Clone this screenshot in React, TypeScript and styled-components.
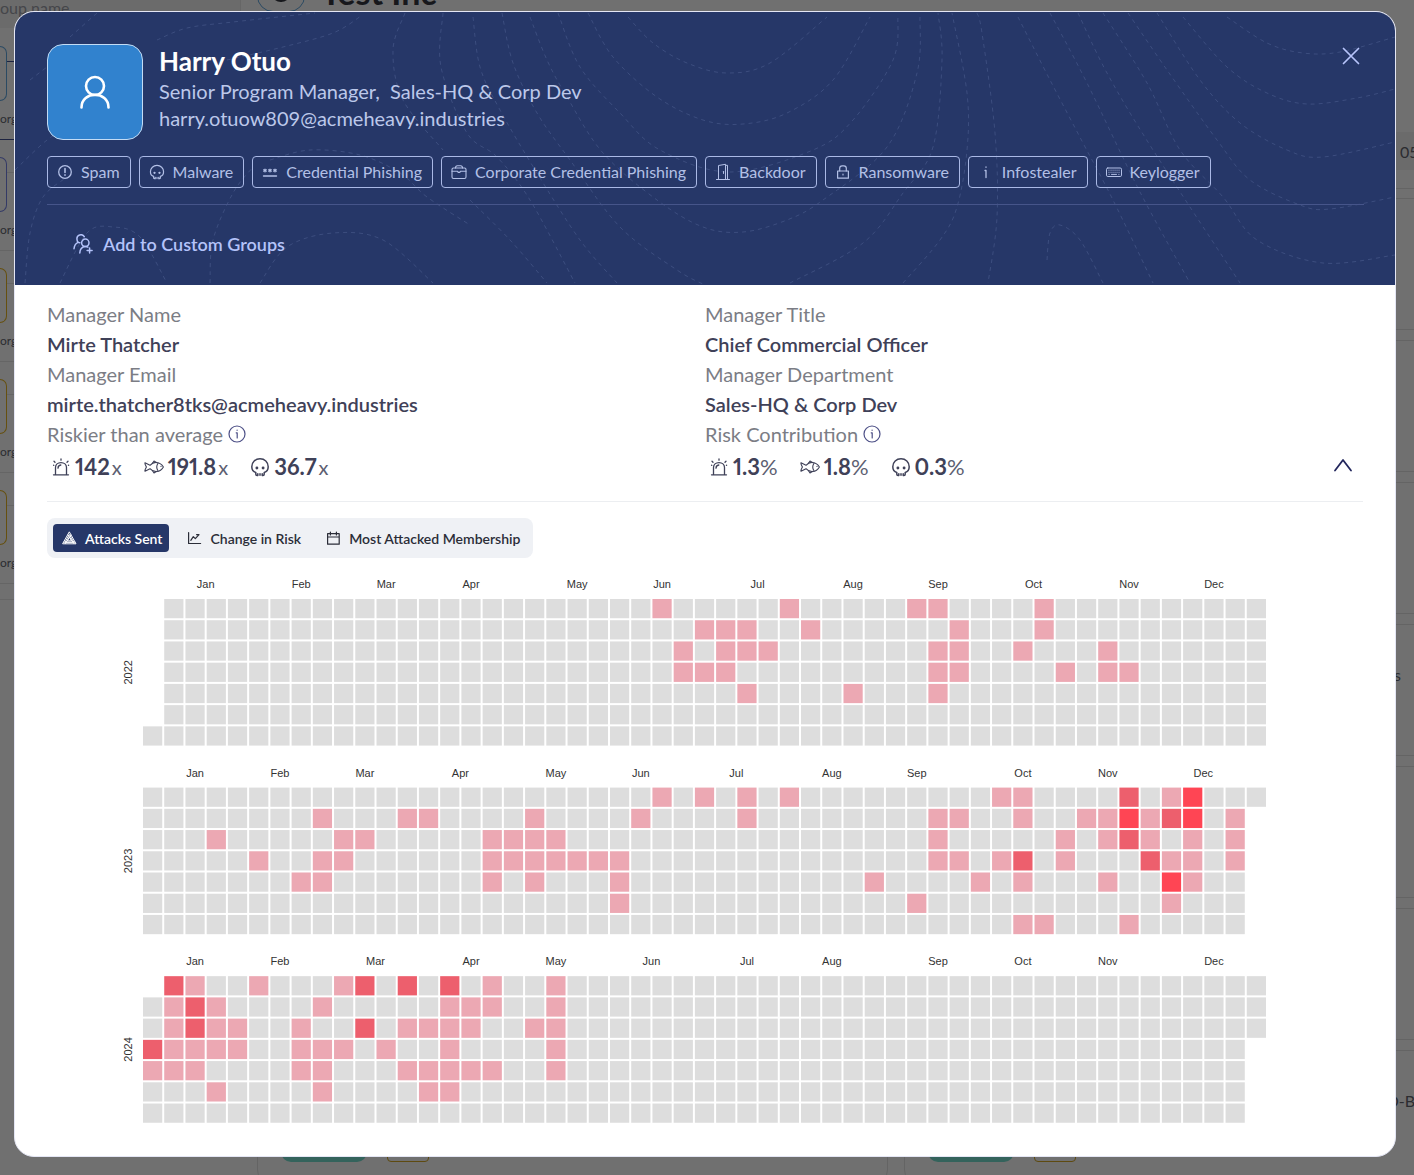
import React from "react";
import styled, { createGlobalStyle } from "styled-components";

const GlobalStyle = createGlobalStyle`
  *, *::before, *::after { box-sizing: border-box; }
  body { margin: 0; background: #707070; }
  button { font: inherit; color: inherit; background: none; border: 0; padding: 0; cursor: pointer; }
  h1, h2, p, ul, dl, dd, dt { margin: 0; padding: 0; }
`;

/* ---------- Dimmed page behind the dialog ---------- */

const Page = styled.div`
  position: relative;
  min-height: 100vh;
  overflow: hidden;
  background: #707070;
  font-family: Lato, "Noto Sans", sans-serif;
`;

const Behind = styled.div`
  position: absolute;
  inset: 0;
  display: flex;
  overflow: hidden;
  color: #2b2c30;
`;

const Sidebar = styled.aside`
  flex: 0 0 241px;
  height: 600px;
  border-bottom: 1px solid #666666;
`;

const SearchHint = styled.p`
  height: 28px;
  margin-bottom: 18px;
  border-right: 1px solid #666666;
  background: #6b6b6b;
  color: #45464a;
  font-size: 16px;
  line-height: 16px;
`;

const Node = styled.div<{ $divider: string }>`
  height: 94px;
  margin-bottom: 17px;
  border-bottom: 1px solid ${(p) => p.$divider};
  font-size: 12px;
  line-height: 36px;
`;

const NodeTop = styled.div<{ $line: string }>`
  display: flex;
  &::after {
    content: "";
    flex: 1;
    height: 16px;
    border-bottom: 1px solid ${(p) => p.$line};
  }
`;

const NodeBox = styled.div<{ $color: string }>`
  width: 7px;
  height: 55px;
  border: 1px solid ${(p) => p.$color};
  border-left: 0;
  border-radius: 0 12px 12px 0;
`;

const Main = styled.div`
  flex: 1;
  min-width: 0;
  padding-left: 16px;
`;

const TitleRow = styled.div`
  display: flex;
  align-items: flex-end;
  gap: 16px;
  height: 12px;
  color: #17181c;
  font-size: 34px;
  font-weight: 700;
  line-height: 40px;
`;

const TitleIcon = styled.div`
  display: flex;
  justify-content: center;
  align-items: flex-end;
  width: 48px;
  height: 48px;
  padding-bottom: 8px;
  border: 1px solid #2b4a63;
  border-radius: 16px;
`;

const FilterBand = styled.div`
  display: flex;
  align-items: center;
  height: 38px;
  margin: 120px 0 18px 647px;
  padding-left: 496px;
  background: #6b6b6b;
  font-size: 16px;
  white-space: nowrap;
`;

const CardGrid = styled.div`
  display: grid;
  grid-template-columns: 631px 631px;
  grid-auto-rows: 132px;
  gap: 10px 16px;
  padding-top: 9px;
  border-top: 1px solid #646464;
`;

const Card = styled.div`
  display: flex;
  flex-direction: column;
  justify-content: space-between;
  padding: 38px 23px 19px;
  border: 1px solid #646464;
  border-radius: 12px;
`;

const CardNote = styled.span<{ $indent: number }>`
  height: 24px;
  padding-left: ${(p) => p.$indent}px;
  font-size: 16px;
  line-height: 24px;
  white-space: nowrap;
`;

const Badges = styled.div`
  display: flex;
  gap: 20px;
`;

const Pill = styled.span`
  width: 86px;
  height: 20px;
  border-radius: 10px;
  background: #34635c;
`;

const Outline = styled.span`
  width: 42px;
  height: 20px;
  border: 1px solid #5e4a10;
  border-radius: 4px;
`;

/* ---------- Dialog ---------- */

const Dialog = styled.section`
  position: relative;
  margin: 11px 18px 18px 14px;
  border: 1px solid #e4e6f4;
  border-radius: 20px;
  background: #ffffff;
  overflow: hidden;
`;

const Header = styled.header`
  position: relative;
  padding: 32px 31px 0 32px;
  background: #263768;
  color: #bcc8ea;
`;

const Contours = styled.svg`
  position: absolute;
  inset: 0;
  width: 100%;
  height: 100%;
  fill: none;
  stroke: #8f9fd0;
  stroke-opacity: 0.22;
  stroke-dasharray: 4 4;
`;

const HeaderInner = styled.div`
  position: relative;
`;

const Identity = styled.div`
  display: flex;
  align-items: flex-start;
  gap: 16px;
`;

const Avatar = styled.div`
  display: grid;
  place-items: center;
  width: 96px;
  height: 96px;
  border: 1px solid #c3dcf5;
  border-radius: 16px;
  background: #3182ce;
  color: #ffffff;
`;

const Who = styled.div`
  flex: 1;
  font-size: 20px;
  line-height: 27px;
`;

const Name = styled.h1`
  color: #ffffff;
  font-size: 26px;
  line-height: 34px;
  font-weight: 700;
`;

const CloseButton = styled.button`
  display: grid;
  place-items: center;
  width: 26px;
  height: 24px;
  color: #b7c4fb;
`;

const Chips = styled.ul`
  display: flex;
  flex-wrap: wrap;
  gap: 8px;
  margin: 16px 0;
  list-style: none;
`;

const Chip = styled.li`
  display: flex;
  align-items: center;
  gap: 8px;
  height: 32px;
  padding: 0 10px 1px 9px;
  border: 1px solid #aab9e6;
  border-radius: 4px;
  color: #b3c0e6;
  font-size: 16px;
  line-height: 20px;
  white-space: nowrap;
`;

const Actions = styled.div`
  display: flex;
  align-items: center;
  height: 81px;
  padding-bottom: 2px;
  border-top: 1px solid #46558a;
`;

const GroupButton = styled.button`
  display: flex;
  align-items: center;
  gap: 10px;
  height: 40px;
  padding: 0 26px;
  color: #b4c3fa;
  font-size: 18px;
  font-weight: 600;
`;

const Body = styled.div`
  padding: 14px 32px 16px;
`;

const Details = styled.div`
  display: grid;
  grid-template-columns: 1fr 1fr;
  padding-bottom: 16px;
  border-bottom: 1px solid #eceef1;
`;

const Fields = styled.dl`
  font-size: 20px;
  line-height: 30px;
`;

const Label = styled.dt`
  display: flex;
  align-items: center;
  gap: 5px;
  color: #7b7d85;
`;

const Value = styled.dd`
  color: #3f4158;
  font-weight: 600;
`;

const Stats = styled.dd`
  display: flex;
  align-items: center;
  gap: 22px;
  height: 36px;
  padding-left: 4px;
  color: #3f4158;
`;

const Stat = styled.span`
  display: flex;
  align-items: center;
  gap: 4px;
  font-size: 22px;
  font-weight: 700;
  font-variant-numeric: proportional-nums;
`;

const Unit = styled.span<{ $apart: boolean }>`
  margin-left: ${(p) => (p.$apart ? "2px" : "0")};
  color: #5d5f72;
  font-size: ${(p) => (p.$apart ? "20px" : "22px")};
  font-weight: 400;
`;

const CollapseButton = styled.button`
  display: grid;
  place-items: center;
  width: 40px;
  height: 36px;
  margin-left: auto;
  color: #22265c;
`;

const Tabs = styled.div`
  display: inline-flex;
  gap: 9px;
  margin-top: 16px;
  padding: 6px;
  border-radius: 8px;
  background: #eff1f5;
  vertical-align: top;
`;

const Tab = styled.button<{ $active?: boolean }>`
  display: flex;
  align-items: center;
  gap: 8px;
  height: 28px;
  padding: 0 7px 0 9px;
  border-radius: 4px;
  background: ${(p) => (p.$active ? "#263768" : "transparent")};
  color: ${(p) => (p.$active ? "#ffffff" : "#2b2d38")};
  font-size: 14px;
  font-weight: 600;
`;

const Chart = styled.svg`
  display: block;
  width: 100%;
  font-family: "Liberation Sans", Arial, sans-serif;
  font-size: 11px;
  fill: #333333;
`;

/* ---------- Icons ---------- */

const Icon = styled.svg`
  flex: none;
  fill: none;
  stroke: currentColor;
  stroke-linecap: round;
  stroke-linejoin: round;
`;

const PersonIcon = () => (
  <Icon width="32" height="34" viewBox="0 0 32 34" strokeWidth="2.6">
    <circle cx="16" cy="11" r="9" />
    <path d="M2.500 32.500 C2.500 15.500 29.500 15.500 29.500 32.500" />
  </Icon>
);

const SpamIcon = () => (
  <Icon width="16" height="16" viewBox="0 0 16 16" strokeWidth="1.3">
    <circle cx="8" cy="8" r="6.300" />
    <path d="M8 4.500v4M8 10.900v.4" strokeWidth="1.600" />
  </Icon>
);

const SkullIcon = ({ size = 16 }: { size?: number }) => (
  <Icon width={size} height={size} viewBox="0 0 20 20" strokeWidth="1.500">
    <path d="M5.800 17v-1.600C3 14.800 1.800 12.600 1.800 9.800 1.800 5 5.400 1.800 10 1.800s8.200 3.200 8.200 8c0 2.800-1.200 5-4 5.600V17M5.800 15.600v1.600c0 .8.600 1.200 1.300 1.200h.7v-1.600M10 16.800v1.400M12.200 16.800v1.600h.7c.7 0 1.300-.4 1.300-1.200" />
    <circle cx="6.900" cy="11" r=".7" fill="currentColor" />
    <circle cx="13.100" cy="11" r=".7" fill="currentColor" />
  </Icon>
);

const PasswordIcon = () => (
  <Icon width="16" height="16" viewBox="0 0 16 16" strokeWidth="1.100">
    <path d="M1.500 12h13" strokeWidth="1.400" />
    <path d="M3 5v3M1.700 5.700l2.600 1.600M4.300 5.700L1.700 7.300M8 5v3M6.700 5.700l2.600 1.600M9.300 5.700L6.700 7.300M13 5v3M11.700 5.700l2.600 1.600M14.300 5.700l-2.600 1.600" />
  </Icon>
);

const BriefcaseIcon = () => (
  <Icon width="16" height="16" viewBox="0 0 16 16" strokeWidth="1.100">
    <rect x="1" y="4" width="14" height="10.500" rx="1.500" />
    <path d="M4.500 4c0-1.500.5-2.300 1.800-2.300h3.400c1.300 0 1.800.8 1.800 2.300M1 7.200h5.600l.6 1.200h1.600l.6-1.200H15" />
  </Icon>
);

const DoorIcon = () => (
  <Icon width="16" height="18" viewBox="0 0 16 18" strokeWidth="1">
    <path d="M1.500 16.500h13M3.500 16.500v-14l7-1.200v15.200M10.500 2.300h2v14.200M8.500 8.500v2" />
  </Icon>
);

const LockIcon = () => (
  <Icon width="16" height="16" viewBox="0 0 16 16" strokeWidth="1.200">
    <rect x="2.600" y="7" width="10.800" height="7.200" />
    <path d="M4.700 7V4.200c0-1.600 1-2.400 2.400-2.400h1.800c1.400 0 2.400.8 2.400 2.400V7M8 10.200v.8" />
  </Icon>
);

const LetterIIcon = () => (
  <Icon width="16" height="16" viewBox="0 0 16 16" strokeWidth="1.300">
    <path d="M8 6.500v7M8 3v.3M7 6.500h1" />
  </Icon>
);

const KeyboardIcon = () => (
  <Icon width="16" height="16" viewBox="0 0 16 16" strokeWidth="1">
    <rect x=".5" y="4" width="15" height="8.500" rx="1.300" />
    <path d="M2.900 6.200h.1M5 6.200h.1M7 6.200h.1M9 6.200h.1M11 6.200h.1M13 6.200h.1M2.900 8.300h.1M5 8.300h.1M7 8.300h.1M9 8.300h.1M11 8.300h.1M13 8.300h.1" />
    <path d="M3 10.400h.2M5.500 10.400h5M12.800 10.400h.2" />
  </Icon>
);

const CloseIcon = () => (
  <Icon width="18" height="18" viewBox="0 0 18 18" strokeWidth="1.700">
    <path d="M1.500 1.500l15 15M16.500 1.500l-15 15" />
  </Icon>
);

const AddGroupIcon = () => (
  <Icon width="20" height="20" viewBox="0 0 20 20" strokeWidth="1.500">
    <circle cx="12.300" cy="8.800" r="3.700" />
    <path d="M6.800 19c0-3.300 2-6.500 5.500-6.500 1 0 1.800.2 2.600.6" />
    <path d="M11.300 2.600A4 4 0 0 0 4 5.400c0 1.300.5 2.300 1.300 3C2.700 9.400 1.300 11.800 1 14.800M5.300 8.400l1.500.4" />
    <path d="M16.600 14v5M14.100 16.500h5" />
  </Icon>
);

const InfoIcon = () => (
  <Icon width="18" height="18" viewBox="0 0 18 18" strokeWidth="1.200" color="#4c4f86">
    <circle cx="9" cy="9" r="8" />
    <path d="M8.200 7.800H9.200V13M9.100 5v.3" />
  </Icon>
);

const SirenIcon = () => (
  <Icon width="20" height="20" viewBox="0 0 20 20" strokeWidth="1.300">
    <path d="M2.500 17.800h15M4.500 17.600v-7c0-3 2.300-5 5.500-5s5.500 2 5.500 5v7M7 11.200c0-2 1-3 2.800-3.200" />
    <path d="M10 2v1.200M3 4.300l1 1M17 4.300l-1 1M2.800 8.400l-.2-.2M17.400 8.400l.2-.2" />
  </Icon>
);

const FishIcon = () => (
  <Icon width="20" height="20" viewBox="0 0 20 20" strokeWidth="1.100">
    <path d="M6 8.300C9.500 4.200 16 4.200 19.400 10c-3.400 5.800-9.900 5.800-13.400 1.700L1 14.200c-.4-1 .3-2 1.400-4.200C1.300 7.800.6 6.800 1 5.800z" />
    <path d="M8.500 6.200L10 4l2.600 1.600M8.500 13.800L10 16l2.600-1.600M14 6.200c-1.600 2.400-1.600 5.200 0 7.600M17 9.300v.2" />
  </Icon>
);

const ChevronUpIcon = () => (
  <Icon width="20" height="18" viewBox="0 0 20 18" strokeWidth="1.800">
    <path d="M2 12.500L10 2l8 10.500" />
  </Icon>
);

const TriangleIcon = () => (
  <Icon width="15" height="14" viewBox="0 0 15 14" strokeWidth="1">
    <path d="M7.500 1.200L14 12.800H1zM7.500 3.800L11.800 11.200H3.400zM7.500 6.400L9.600 9.800H5.600zM6 4l6 8.600M9 4L3.200 12.600M2 11.200h11" />
  </Icon>
);

const LineChartIcon = () => (
  <Icon width="15" height="14" viewBox="0 0 15 14" strokeWidth="1.200">
    <path d="M1.600 1.500v11h12M3.800 9.300l2.500-3.600 2 2 3.700-4M9.600 3.700H12" />
  </Icon>
);

const CalendarIcon = () => (
  <Icon width="15" height="14" viewBox="0 0 15 14" strokeWidth="1.200">
    <path d="M1.600 2.700h11.600v10.500H1.600zM1.600 6h11.600M4.400 1v3M10.400 1v3" />
  </Icon>
);

/* ---------- Header contour lines ---------- */

type Point = [number, number];

const contourLines: Point[][] = [
  [[142, 28], [172, 16], [218, 10], [300, 1]],
  [[212, 48], [268, 35], [318, 21], [346, 4]],
  [[55, 25], [82, 1]],
  [[15, 68], [32, 55], [55, 38]],
  [[0, 158], [32, 128], [56, 114]],
  [[10, 271], [15, 221], [28, 185], [52, 165]],
  [[390, 1], [378, 38], [388, 88], [428, 138]],
  [[428, 1], [426, 55], [452, 121], [482, 145], [515, 188], [560, 271]],
  [[255, 148], [295, 138], [345, 143], [385, 161], [412, 185], [455, 213]],
  [[195, 271], [198, 228], [218, 181], [238, 155]],
  [[45, 271], [72, 221], [98, 215], [125, 225], [152, 271]],
  [[245, 271], [272, 235], [318, 221], [368, 228], [418, 271]],
  [[613, 5], [638, 31], [672, 51], [712, 61], [755, 51], [812, 5]],
  [[573, 1], [598, 45], [642, 85], [688, 108], [728, 112], [772, 101], [818, 68], [855, 5]],
  [[543, 1], [565, 55], [605, 101], [645, 138], [715, 160], [798, 138], [838, 108], [878, 48], [883, 5]],
  [[515, 5], [532, 48], [552, 85], [588, 141], [642, 188], [688, 215], [728, 220], [772, 208], [808, 188], [872, 135], [902, 61], [905, 5]],
  [[487, 1], [498, 51], [522, 101], [555, 148], [605, 215], [662, 258], [690, 273]],
  [[775, 271], [848, 231], [888, 181], [918, 135], [927, 48], [923, 1]],
  [[458, 5], [465, 55], [485, 98], [522, 161], [565, 228], [602, 271]],
  [[455, 188], [495, 228], [532, 271]],
  [[888, 271], [925, 228], [942, 195], [952, 138], [952, 81], [937, 1]],
  [[962, 1], [967, 21], [980, 121], [982, 205], [973, 271]],
  [[1032, 248], [1035, 221], [1045, 213], [1065, 228], [1088, 271]],
  [[1003, 5], [1035, 68], [1068, 131], [1098, 188], [1138, 271]],
  [[1035, 1], [1072, 71], [1125, 180], [1175, 271]],
  [[1063, 1], [1092, 61], [1138, 138], [1225, 271]],
  [[1088, 1], [1132, 71], [1165, 138], [1208, 185], [1242, 228], [1308, 251], [1380, 243]],
  [[1113, 1], [1152, 58], [1202, 128], [1235, 168], [1285, 193], [1315, 197], [1380, 185]],
  [[1142, 1], [1185, 68], [1225, 111], [1272, 138], [1308, 145], [1380, 130]],
  [[1168, 5], [1212, 55], [1252, 81], [1292, 92], [1342, 86], [1380, 77]],
  [[1212, 5], [1252, 31], [1288, 41], [1325, 40], [1380, 25]],
];

/** Smooth curve through all the points of a line. */
const toCurve = (points: Point[]) =>
  points.reduce((path, point, i) => {
    if (i === 0) return `M${point[0]} ${point[1]}`;
    const before = points[i - 2] ?? points[i - 1];
    const from = points[i - 1];
    const after = points[i + 1] ?? point;
    const c1 = [from[0] + (point[0] - before[0]) / 6, from[1] + (point[1] - before[1]) / 6];
    const c2 = [point[0] - (after[0] - from[0]) / 6, point[1] - (after[1] - from[1]) / 6];
    return `${path} C${c1[0]} ${c1[1]} ${c2[0]} ${c2[1]} ${point[0]} ${point[1]}`;
  }, "");

/* ---------- Attack calendar ---------- */

/* For each weekday from Sunday on: the weeks with attacks, by level. */
type Week = { low?: number[]; mid?: number[]; high?: number[] };

const attacks: Record<number, Week[]> = {
  2022: [
    { low: [24, 30, 36, 37, 42] },
    { low: [26, 27, 28, 31, 38, 42] },
    { low: [25, 27, 28, 29, 37, 38, 41, 45] },
    { low: [25, 26, 27, 37, 38, 43, 45, 46] },
    { low: [28, 33, 37] },
    {},
    {},
  ],
  2023: [
    { low: [24, 26, 28, 30, 40, 41, 48], mid: [46], high: [49] },
    { low: [8, 12, 13, 18, 23, 28, 37, 38, 41, 44, 45, 47, 51], mid: [48], high: [46, 49] },
    { low: [3, 9, 10, 16, 17, 18, 19, 37, 43, 45, 47, 49, 51], mid: [46] },
    { low: [5, 8, 9, 16, 17, 18, 19, 20, 21, 22, 37, 38, 40, 43, 48, 49, 51], mid: [41, 47] },
    { low: [7, 8, 16, 18, 22, 34, 39, 41, 45, 49], high: [48] },
    { low: [22, 36, 48] },
    { low: [41, 42, 46] },
  ],
  2024: [
    { low: [2, 5, 9, 16, 19], mid: [1, 10, 12, 14] },
    { low: [1, 3, 8, 14, 15, 16, 19], mid: [2] },
    { low: [1, 3, 4, 7, 12, 13, 14, 15, 18, 19], mid: [2, 10] },
    { low: [1, 2, 3, 4, 7, 8, 9, 11, 14, 19], mid: [0] },
    { low: [0, 1, 2, 7, 8, 12, 13, 14, 15, 16, 19] },
    { low: [3, 8, 13, 14] },
    {},
  ],
};

const months = ["Jan", "Feb", "Mar", "Apr", "May", "Jun", "Jul", "Aug", "Sep", "Oct", "Nov", "Dec"];
const WIDTH = 1316;
const LEFT = 95;
const TOP = 40;
const CELL = (WIDTH - LEFT - 96) / 53;
const YEAR_STEP = CELL * 7 + 40;

const dayIndex = (year: number, month: number, day: number) =>
  Math.round((Date.UTC(year, month, day) - Date.UTC(year, 0, 1)) / 86400000);

const cellColor = (row: Week, week: number) => {
  if (row.high?.includes(week)) return "#ff4554";
  if (row.mid?.includes(week)) return "#ed5f6d";
  if (row.low?.includes(week)) return "#eca8b3";
  return "#dddddd";
};

const YearBlock = ({ year, top }: { year: number; top: number }) => {
  const firstWeekday = new Date(Date.UTC(year, 0, 1)).getUTCDay();
  const weekOf = (index: number) => Math.floor((index + firstWeekday) / 7);
  const days = Array.from({ length: dayIndex(year, 12, 1) }, (_, i) => i);
  const middle = top + CELL * 3.5;
  return (
    <g>
      <text x={LEFT - 10} y={middle} textAnchor="middle" transform={`rotate(-90 ${LEFT - 10} ${middle})`}>
        {year}
      </text>
      {months.map((month, m) => {
        const first = weekOf(dayIndex(year, m, 1));
        const last = weekOf(dayIndex(year, m + 1, 0));
        return (
          <text key={month} x={LEFT + ((first + last + 1) / 2) * CELL} y={top - 10} textAnchor="middle">
            {month}
          </text>
        );
      })}
      {days.map((i) => {
        const week = weekOf(i);
        const weekday = (i + firstWeekday) % 7;
        return (
          <rect
            key={i}
            x={LEFT + week * CELL + 1}
            y={top + weekday * CELL + 1}
            width={CELL - 2}
            height={CELL - 2}
            fill={cellColor(attacks[year][weekday], week)}
          />
        );
      })}
    </g>
  );
};

/* ---------- Content ---------- */

const chips = [
  { label: "Spam", icon: <SpamIcon /> },
  { label: "Malware", icon: <SkullIcon /> },
  { label: "Credential Phishing", icon: <PasswordIcon /> },
  { label: "Corporate Credential Phishing", icon: <BriefcaseIcon /> },
  { label: "Backdoor", icon: <DoorIcon /> },
  { label: "Ransomware", icon: <LockIcon /> },
  { label: "Infostealer", icon: <LetterIIcon /> },
  { label: "Keylogger", icon: <KeyboardIcon /> },
];

const nodes = [
  { box: "#2b4a63", line: "#1d2340", divider: "#1d2340" },
  { box: "#343a66", line: "#656565", divider: "#656565" },
  { box: "#66500f", line: "#656565", divider: "#656565" },
  { box: "#66500f", line: "#656565", divider: "#656565" },
  { box: "#66500f", line: "#656565", divider: "#656565" },
];

const StatRow = ({ values, unit }: { values: string[]; unit: string }) => (
  <>
    {[<SirenIcon />, <FishIcon />, <SkullIcon size={20} />].map((icon, i) => (
      <Stat key={i}>
        {icon}
        <span>
          {values[i]}
          <Unit $apart={unit === "x"}>{unit}</Unit>
        </span>
      </Stat>
    ))}
  </>
);

const Backdrop = () => (
  <Behind aria-hidden="true">
    <Sidebar>
      <SearchHint>oup name</SearchHint>
      {nodes.map((node, i) => (
        <Node key={i} $divider={node.divider}>
          <NodeTop $line={node.line}>
            <NodeBox $color={node.box} />
          </NodeTop>
          org
        </Node>
      ))}
    </Sidebar>
    <Main>
      <TitleRow>
        <TitleIcon>
          <Icon width="22" height="22" viewBox="0 0 22 22" strokeWidth="2">
            <circle cx="11" cy="11" r="9" />
            <path d="M11 11v9M4 15l7-4" />
          </Icon>
        </TitleIcon>
        Test Inc
      </TitleRow>
      <FilterBand>05</FilterBand>
      <CardGrid>
        {Array.from({ length: 14 }, (_, i) => (
          <Card key={i}>
            <CardNote $indent={i === 7 ? 466 : 458}>{i === 7 ? "s" : i === 13 ? "O-B" : ""}</CardNote>
            {i >= 12 && (
              <Badges>
                <Pill />
                <Outline />
              </Badges>
            )}
          </Card>
        ))}
      </CardGrid>
    </Main>
  </Behind>
);

export default function App() {
  return (
    <Page>
      <GlobalStyle />
      <Backdrop />
      <Dialog role="dialog" aria-labelledby="person-name">
        <Header>
          <Contours viewBox="0 0 1380 273" preserveAspectRatio="none" aria-hidden="true">
            {contourLines.map((line, i) => (
              <path key={i} d={toCurve(line)} />
            ))}
          </Contours>
          <HeaderInner>
            <Identity>
              <Avatar>
                <PersonIcon />
              </Avatar>
              <Who>
                <Name id="person-name">Harry Otuo</Name>
                <p>Senior Program Manager,&nbsp; Sales-HQ &amp; Corp Dev</p>
                <p>harry.otuow809@acmeheavy.industries</p>
              </Who>
              <CloseButton aria-label="Close">
                <CloseIcon />
              </CloseButton>
            </Identity>
            <Chips>
              {chips.map((chip) => (
                <Chip key={chip.label}>
                  {chip.icon}
                  {chip.label}
                </Chip>
              ))}
            </Chips>
            <Actions>
              <GroupButton>
                <AddGroupIcon />
                Add to Custom Groups
              </GroupButton>
            </Actions>
          </HeaderInner>
        </Header>
        <Body>
          <Details>
            <Fields>
              <Label>Manager Name</Label>
              <Value>Mirte Thatcher</Value>
              <Label>Manager Email</Label>
              <Value>mirte.thatcher8tks@acmeheavy.industries</Value>
              <Label>
                Riskier than average <InfoIcon />
              </Label>
              <Stats>
                <StatRow values={["142", "191.8", "36.7"]} unit="x" />
              </Stats>
            </Fields>
            <Fields>
              <Label>Manager Title</Label>
              <Value>Chief Commercial Officer</Value>
              <Label>Manager Department</Label>
              <Value>Sales-HQ &amp; Corp Dev</Value>
              <Label>
                Risk Contribution <InfoIcon />
              </Label>
              <Stats>
                <StatRow values={["1.3", "1.8", "0.3"]} unit="%" />
                <CollapseButton aria-label="Collapse details">
                  <ChevronUpIcon />
                </CollapseButton>
              </Stats>
            </Fields>
          </Details>
          <Tabs>
            <Tab $active>
              <TriangleIcon />
              Attacks Sent
            </Tab>
            <Tab>
              <LineChartIcon />
              Change in Risk
            </Tab>
            <Tab>
              <CalendarIcon />
              Most Attacked Membership
            </Tab>
          </Tabs>
          <Chart viewBox={`0 0 ${WIDTH} 582`} role="img" aria-label="Attacks sent per day">
            {[2022, 2023, 2024].map((year, i) => (
              <YearBlock key={year} year={year} top={TOP + i * YEAR_STEP} />
            ))}
          </Chart>
        </Body>
      </Dialog>
    </Page>
  );
}
